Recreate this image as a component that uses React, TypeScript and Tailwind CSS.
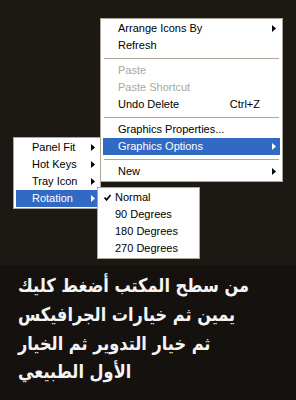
import React from "react";

const Arrow = ({ white }: { white?: boolean }) => (
  <svg width="4" height="7" viewBox="0 0 4 7" className="shrink-0">
    <path d="M0 0 L4 3.5 L0 7 Z" fill={white ? "#ffffff" : "#000000"} />
  </svg>
);

const Check = () => (
  <svg width="7" height="7" viewBox="0 0 7 7" className="shrink-0">
    <path d="M0.5 3.5 L2.6 5.8 L6.5 1" stroke="#000" strokeWidth="1.7" fill="none" />
  </svg>
);

type Item = {
  label: string;
  sub?: boolean;
  shortcut?: string;
  disabled?: boolean;
  active?: boolean;
};

const Row = ({ it, pl, arrowMr }: { it: Item; pl: string; arrowMr: string }) => (
  <div
    className={`flex h-[17px] items-center ${pl} ${
      it.active ? "bg-[#316ac5] text-white" : it.disabled ? "text-[#aca899]" : "text-black"
    }`}
  >
    <span className="flex-1 whitespace-nowrap">{it.label}</span>
    {it.shortcut && <span className="mr-[20px] whitespace-nowrap">{it.shortcut}</span>}
    {it.sub && (
      <span className={arrowMr}>
        <Arrow white={it.active} />
      </span>
    )}
  </div>
);

const Sep = () => (
  <div className="flex h-[8px] items-center px-[1px]">
    <div className="h-px w-full bg-[#aca899]" />
  </div>
);

export default function App() {
  return (
    <div
      className="relative h-[400px] w-[296px] overflow-hidden bg-[#15110e]"
      style={{ fontFamily: '"Liberation Sans", Arial, sans-serif' }}
    >
      <div className="h-[265px] w-full bg-[#1c1814]" />
      <div
        className="absolute left-[18px] top-[271px] origin-left scale-x-[0.85] whitespace-nowrap text-[19px] font-bold leading-[29px] text-[#f4f4f4]"
        style={{ fontFamily: '"DejaVu Sans", "Liberation Sans", sans-serif' }}
      >
        <div dir="rtl" className="w-fit">من سطح المكتب أضغط كليك</div>
        <div dir="rtl" className="w-fit">يمين ثم خيارات الجرافيكس</div>
        <div dir="rtl" className="w-fit">ثم خيار التدوير ثم الخيار</div>
        <div dir="rtl" className="w-fit leading-[26px]">الأول الطبيعي</div>
      </div>

      {/* main menu */}
      <div className="absolute left-[100px] top-[18px] w-[183px] border border-[#aca899] bg-white px-[2px] py-[1px] text-[11px]">
        <Row it={{ label: "Arrange Icons By", sub: true }} pl="pl-[15px]" arrowMr="mr-[4px]" />
        <Row it={{ label: "Refresh" }} pl="pl-[15px]" arrowMr="mr-[4px]" />
        <Sep />
        <Row it={{ label: "Paste", disabled: true }} pl="pl-[15px]" arrowMr="mr-[4px]" />
        <Row it={{ label: "Paste Shortcut", disabled: true }} pl="pl-[15px]" arrowMr="mr-[4px]" />
        <Row it={{ label: "Undo Delete", shortcut: "Ctrl+Z" }} pl="pl-[15px]" arrowMr="mr-[4px]" />
        <Sep />
        <Row it={{ label: "Graphics Properties..." }} pl="pl-[15px]" arrowMr="mr-[4px]" />
        <Row it={{ label: "Graphics Options", sub: true, active: true }} pl="pl-[15px]" arrowMr="mr-[4px]" />
        <Sep />
        <Row it={{ label: "New", sub: true }} pl="pl-[15px]" arrowMr="mr-[4px]" />
      </div>

      {/* left submenu */}
      <div className="absolute left-[13px] top-[137px] w-[88px] border border-[#aca899] bg-white px-[2px] py-[1px] text-[11px]">
        <Row it={{ label: "Panel Fit", sub: true }} pl="pl-[16px]" arrowMr="mr-[3px]" />
        <Row it={{ label: "Hot Keys", sub: true }} pl="pl-[16px]" arrowMr="mr-[3px]" />
        <Row it={{ label: "Tray Icon", sub: true }} pl="pl-[16px]" arrowMr="mr-[3px]" />
        <Row it={{ label: "Rotation", sub: true, active: true }} pl="pl-[16px]" arrowMr="mr-[3px]" />
      </div>

      {/* rotation submenu */}
      <div className="absolute left-[97px] top-[187px] w-[103px] border border-[#aca899] bg-white px-[2px] py-[1px] text-[11px] text-black">
        {["Normal", "90 Degrees", "180 Degrees", "270 Degrees"].map((l, i) => (
          <div key={l} className="flex h-[17px] items-center">
            <span className="flex w-[15px] shrink-0 pl-[4px]">{i === 0 && <Check />}</span>
            <span className="whitespace-nowrap">{l}</span>
          </div>
        ))}
      </div>
    </div>
  );
}
